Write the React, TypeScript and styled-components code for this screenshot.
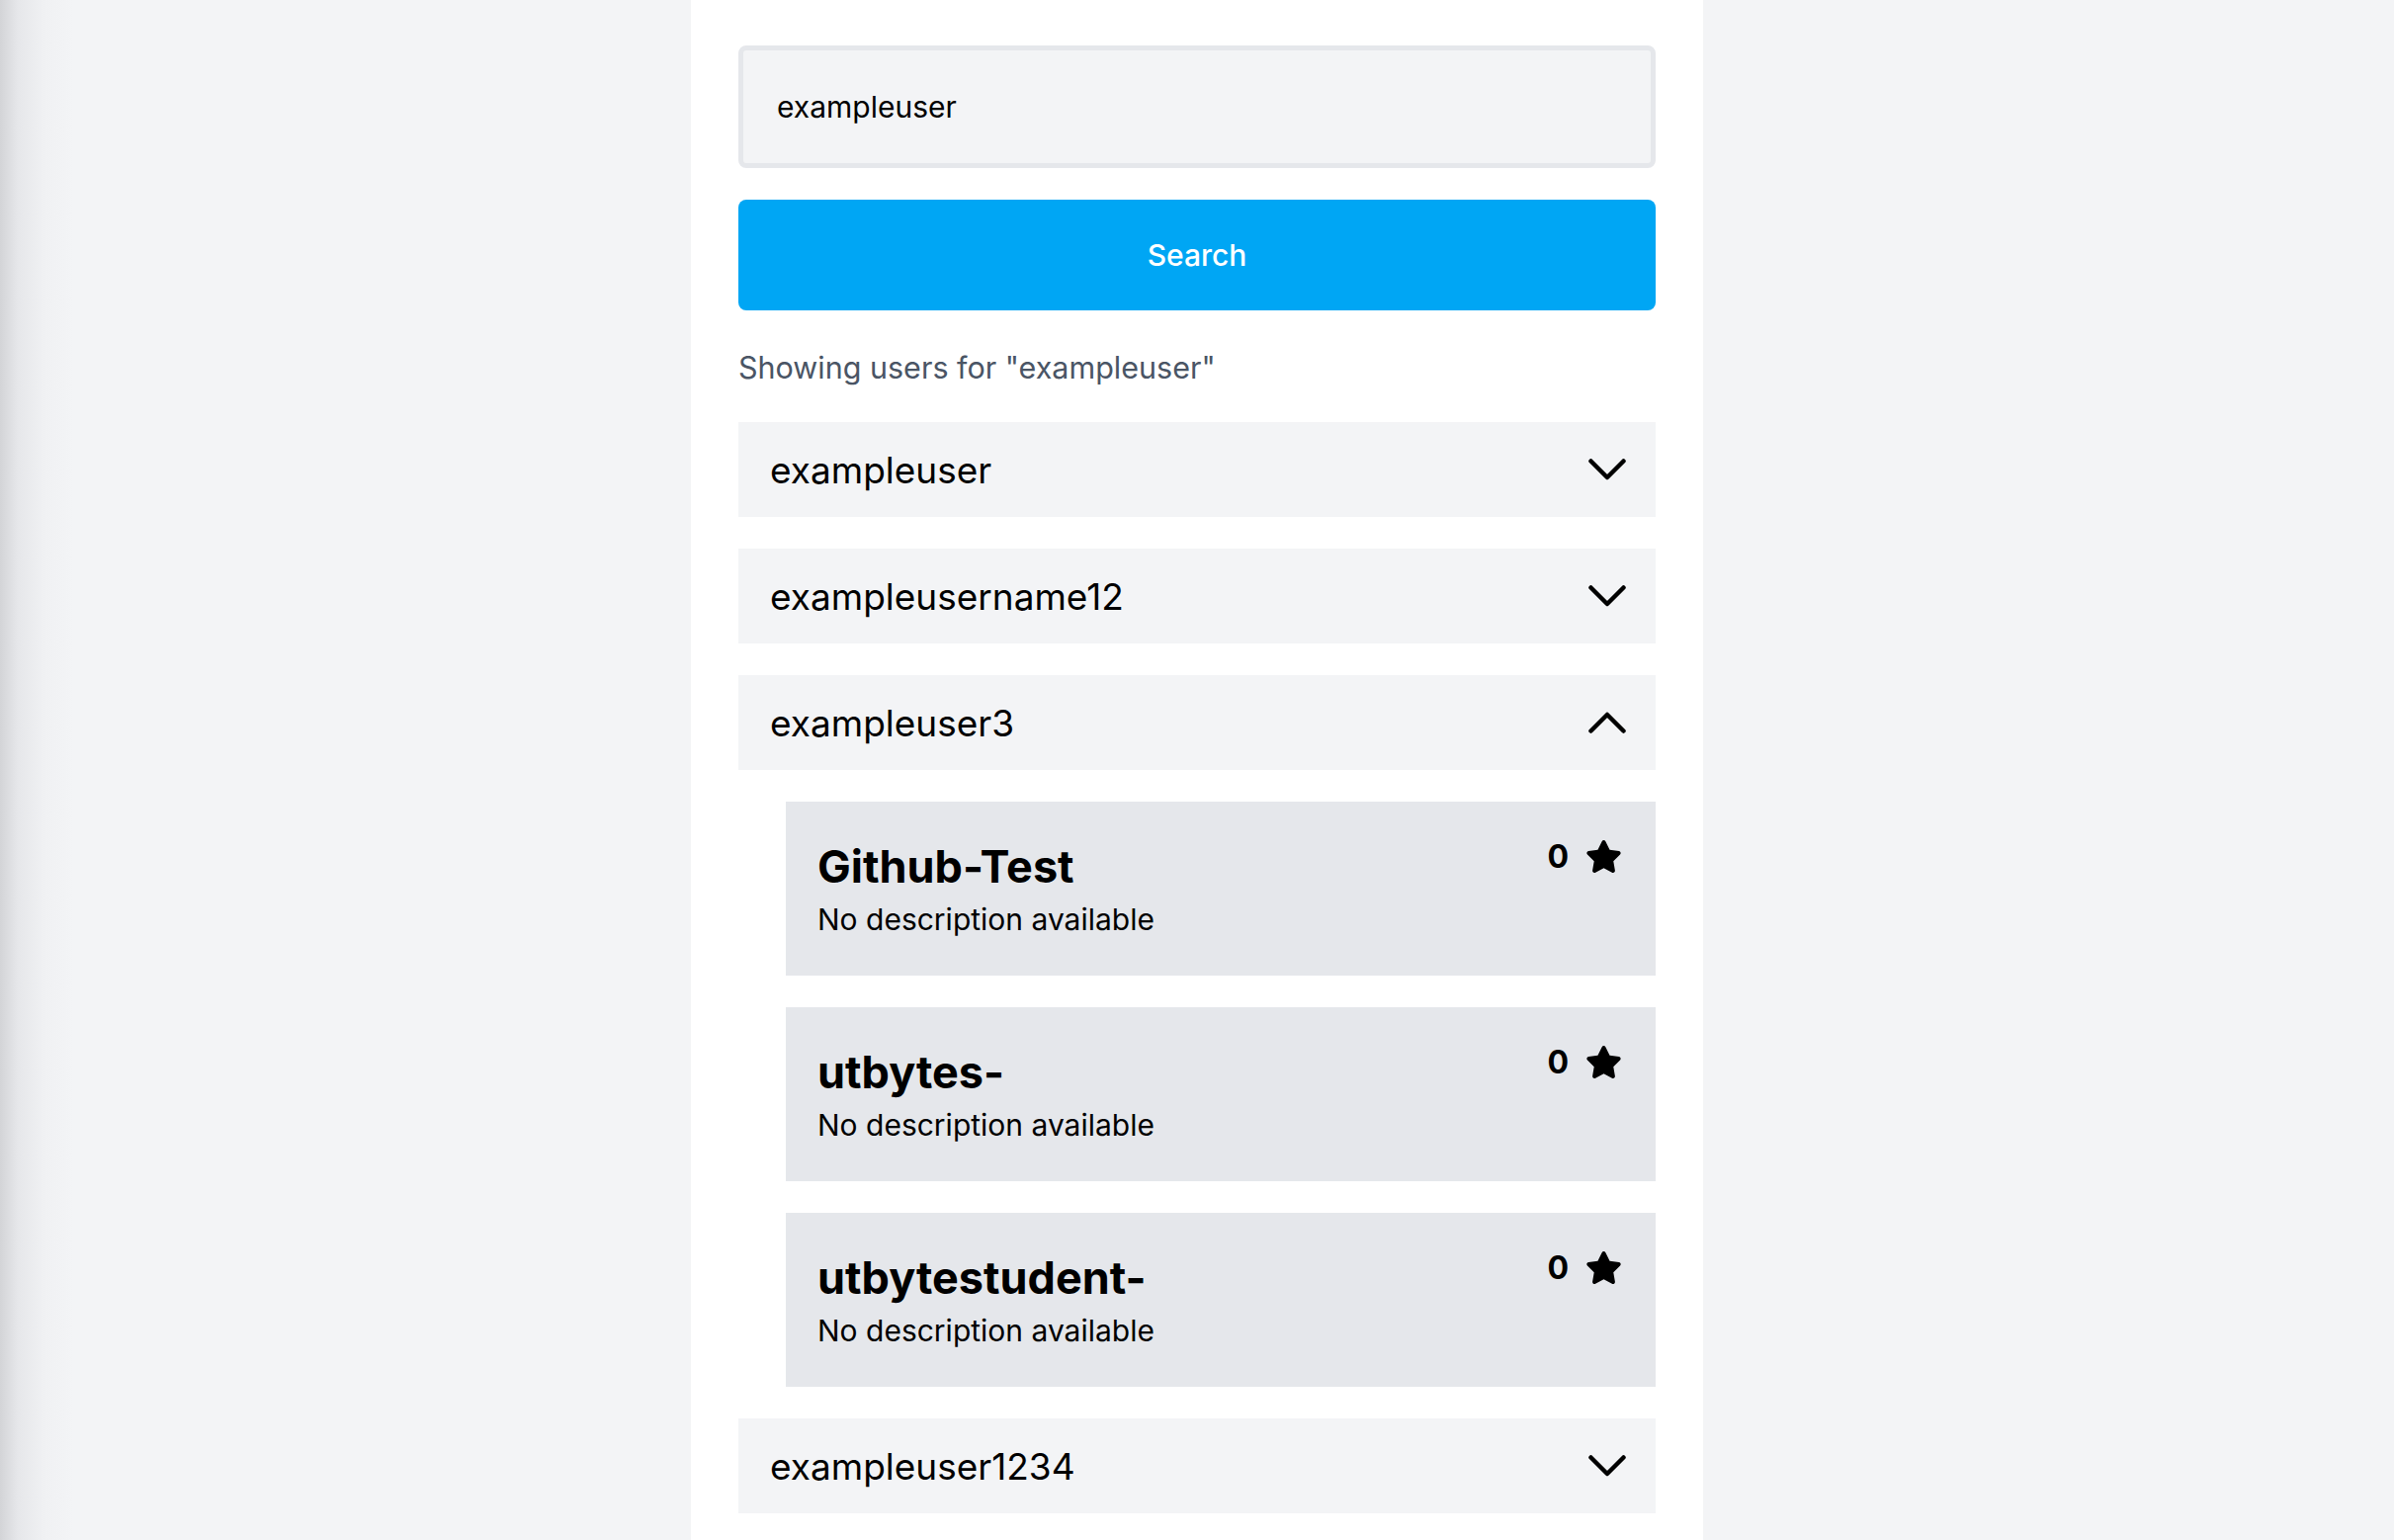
import React from "react";
import styled, { createGlobalStyle } from "styled-components";
import { FaStar } from "react-icons/fa";

const GlobalStyle = createGlobalStyle`
  html, body {
    margin: 0;
    padding: 0;
  }
  body {
    min-height: 100vh;
    font-family: Inter, "Noto Sans", "Liberation Sans", sans-serif;
    color: #000;
    background: linear-gradient(to right, #d3d4d7 0px, #e6e7ea 18px, #f0f1f3 45px, #f3f4f6 75px);
  }
  * { box-sizing: border-box; }
`;

const Page = styled.div`
  display: flex;
  justify-content: center;
  min-height: 100vh;
`;

const Panel = styled.main`
  width: 1024px;
  min-height: 100vh;
  background: #ffffff;
  padding: 46px 48px 0;
  display: flex;
  flex-direction: column;
`;

const SearchInput = styled.input`
  height: 124px;
  width: 100%;
  background: #f3f4f6;
  border: 5px solid #e5e7eb;
  border-radius: 8px;
  padding: 0 34px;
  font-family: inherit;
  font-size: 30px;
  color: #000;
  outline: none;
`;

const SearchButton = styled.button`
  margin-top: 32px;
  height: 112px;
  width: 100%;
  border: none;
  border-radius: 8px;
  background: #00a6f4;
  color: #ffffff;
  font-family: inherit;
  font-size: 30px;
  font-weight: 500;
  cursor: pointer;
`;

const ResultsNote = styled.p`
  margin: 32px 0 0;
  font-size: 30.5px;
  line-height: 52px;
  color: #4a5565;
`;

const UserList = styled.div`
  margin-top: 29px;
  display: flex;
  flex-direction: column;
  gap: 32px;
`;

const UserRow = styled.div`
  height: 96px;
  background: #f3f4f6;
  display: flex;
  align-items: center;
  justify-content: space-between;
  padding: 0 30px 0 32px;
  font-size: 37px;
  cursor: pointer;
`;

const RepoList = styled.div`
  display: flex;
  flex-direction: column;
  gap: 32px;
  padding-left: 48px;
`;

const RepoCard = styled.div`
  height: 176px;
  background: #e5e7eb;
  padding: 37px 34px 0 32px;
  display: flex;
  justify-content: space-between;
  align-items: flex-start;
`;

const RepoText = styled.div`
  display: flex;
  flex-direction: column;
  padding-top: 4px;
`;

const RepoTitle = styled.h3`
  margin: 0;
  font-size: 45px;
  line-height: 50px;
  font-weight: 700;
`;

const RepoDesc = styled.p`
  margin: 4px 0 0;
  font-size: 30px;
  line-height: 48px;
`;

const Stars = styled.div`
  display: flex;
  align-items: center;
  gap: 17px;
  font-size: 32px;
  font-weight: 700;
  line-height: 36px;
`;

const Chevron = ({ up }: { up?: boolean }) => (
  <svg width="38" height="22" viewBox="0 0 38 22" fill="none">
    <polyline
      points={up ? "2.5,19.5 19,3 35.5,19.5" : "2.5,2.5 19,19 35.5,2.5"}
      stroke="#000"
      strokeWidth="4.5"
      strokeLinecap="round"
      strokeLinejoin="round"
    />
  </svg>
);

const users = [
  { name: "exampleuser", open: false },
  { name: "exampleusername12", open: false },
  { name: "exampleuser3", open: true },
  { name: "exampleuser1234", open: false },
];

const repos = [
  { name: "Github-Test", desc: "No description available", stars: 0 },
  { name: "utbytes-", desc: "No description available", stars: 0 },
  { name: "utbytestudent-", desc: "No description available", stars: 0 },
];

export default function App() {
  return (
    <>
      <GlobalStyle />
      <Page>
        <Panel>
          <SearchInput defaultValue="exampleuser" />
          <SearchButton>Search</SearchButton>
          <ResultsNote>Showing users for "exampleuser"</ResultsNote>
          <UserList>
            {users.map((u) => (
              <React.Fragment key={u.name}>
                <UserRow>
                  <span>{u.name}</span>
                  <Chevron up={u.open} />
                </UserRow>
                {u.open && (
                  <RepoList>
                    {repos.map((r) => (
                      <RepoCard key={r.name}>
                        <RepoText>
                          <RepoTitle>{r.name}</RepoTitle>
                          <RepoDesc>{r.desc}</RepoDesc>
                        </RepoText>
                        <Stars>
                          <span>{r.stars}</span>
                          <FaStar size={37} />
                        </Stars>
                      </RepoCard>
                    ))}
                  </RepoList>
                )}
              </React.Fragment>
            ))}
          </UserList>
        </Panel>
      </Page>
    </>
  );
}
